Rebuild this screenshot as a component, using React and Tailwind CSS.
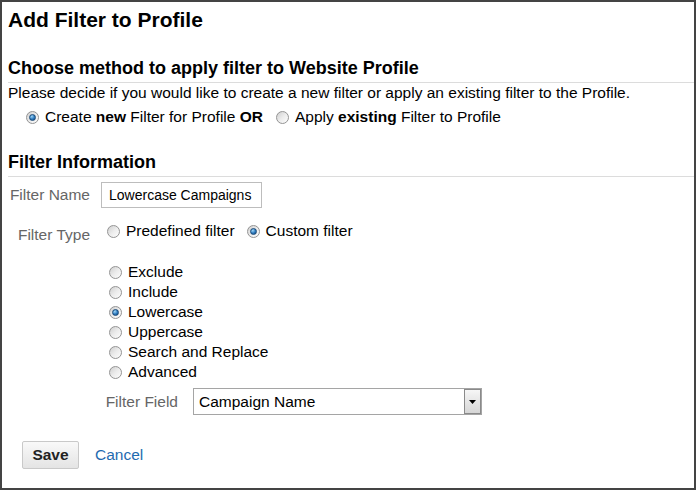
import React from 'react';

const Radio = ({ checked = false, className = '' }) => (
  <span
    className={`inline-flex w-[13px] h-[13px] shrink-0 items-center justify-center rounded-full border border-[#949494] bg-gradient-to-br from-[#cfcfcf] via-[#ececec] to-[#fdfdfd] ${className}`}
  >
    {checked && (
      <span className="w-[7px] h-[7px] rounded-full border border-[#1b4a78] bg-[radial-gradient(circle_at_35%_30%,#9fd6f7,#2a78bd_55%,#174a7d)]" />
    )}
  </span>
);

const SubOption = ({ label, checked }) => (
  <div className="flex items-center h-[20px] pl-[8px]">
    <Radio checked={checked} />
    <span className="ml-[6px]">{label}</span>
  </div>
);

export default function App() {
  const subOptions = ['Exclude', 'Include', 'Lowercase', 'Uppercase', 'Search and Replace', 'Advanced'];

  return (
    <div className="w-[696px] h-[490px] border-2 border-[#444] bg-white text-black font-['Liberation_Sans',Arial,sans-serif] text-[15.5px] leading-[20px] overflow-hidden">
      <div className="pl-[6px]">
        <h1 className="mt-[6px] text-[21px] leading-[24px] font-bold">Add Filter to Profile</h1>

        <h2 className="mt-[25px] text-[18px] leading-[22px] font-bold pb-[3px] border-b border-[#dcdcdc]">
          Choose method to apply filter to Website Profile
        </h2>
        <p className="leading-[20px]">
          Please decide if you would like to create a new filter or apply an existing filter to the Profile.
        </p>
        <div className="mt-[4px] h-[20px] flex items-center">
          <Radio checked className="ml-[18px]" />
          <span className="ml-[6px]">
            Create <b>new</b> Filter for Profile <b>OR</b>
          </span>
          <Radio className="ml-[13px]" />
          <span className="ml-[6px]">
            Apply <b>existing</b> Filter to Profile
          </span>
        </div>

        <h2 className="mt-[24px] text-[18px] leading-[22px] font-bold pb-[3px] border-b border-[#dcdcdc]">
          Filter Information
        </h2>

        <div className="mt-[5px] flex items-center h-[26px]">
          <label className="w-[82px] text-right text-[#666]">Filter Name</label>
          <div className="ml-[11px] w-[161px] h-[26px] border border-[#bdbdbd] flex items-center px-[7px] text-[14px]">
            Lowercase Campaigns
          </div>
        </div>

        <div className="mt-[13px] flex items-start">
          <label className="w-[82px] pt-[4px] text-right text-[#666]">Filter Type</label>
          <div className="ml-[11px] flex flex-col">
            <div className="h-[20px] flex items-center">
              <Radio className="ml-[6px]" />
              <span className="ml-[6px]">Predefined filter</span>
              <Radio checked className="ml-[12px]" />
              <span className="ml-[6px]">Custom filter</span>
            </div>

            <div className="mt-[21px] flex flex-col">
              {subOptions.map((o) => (
                <SubOption key={o} label={o} checked={o === 'Lowercase'} />
              ))}
            </div>

            <div className="mt-[6px] flex items-center">
              <label className="w-[77px] text-right text-[#666]">Filter Field</label>
              <div className="ml-[15px] w-[289px] h-[27px] border border-[#a5a5a5] flex items-stretch">
                <span className="flex-1 flex items-center pl-[5px]">Campaign Name</span>
                <span className="w-[17px] border border-[#8a8a8a] bg-gradient-to-b from-[#f6f6f6] to-[#d6d6d6] flex items-center justify-center">
                  <svg width="7" height="4" viewBox="0 0 7 4">
                    <path d="M0 0h7L3.5 4z" fill="#000" />
                  </svg>
                </span>
              </div>
            </div>
          </div>
        </div>

        <div className="mt-[26px] flex items-center">
          <button className="ml-[14px] w-[57px] h-[28px] rounded-[2px] border border-[#c9c9c9] bg-gradient-to-b from-[#f9f9f9] to-[#e4e4e4] font-bold text-[#222] flex items-center justify-center">
            Save
          </button>
          <a href="#" className="ml-[16px] text-[#1f6bb0]">Cancel</a>
        </div>
      </div>
    </div>
  );
}
